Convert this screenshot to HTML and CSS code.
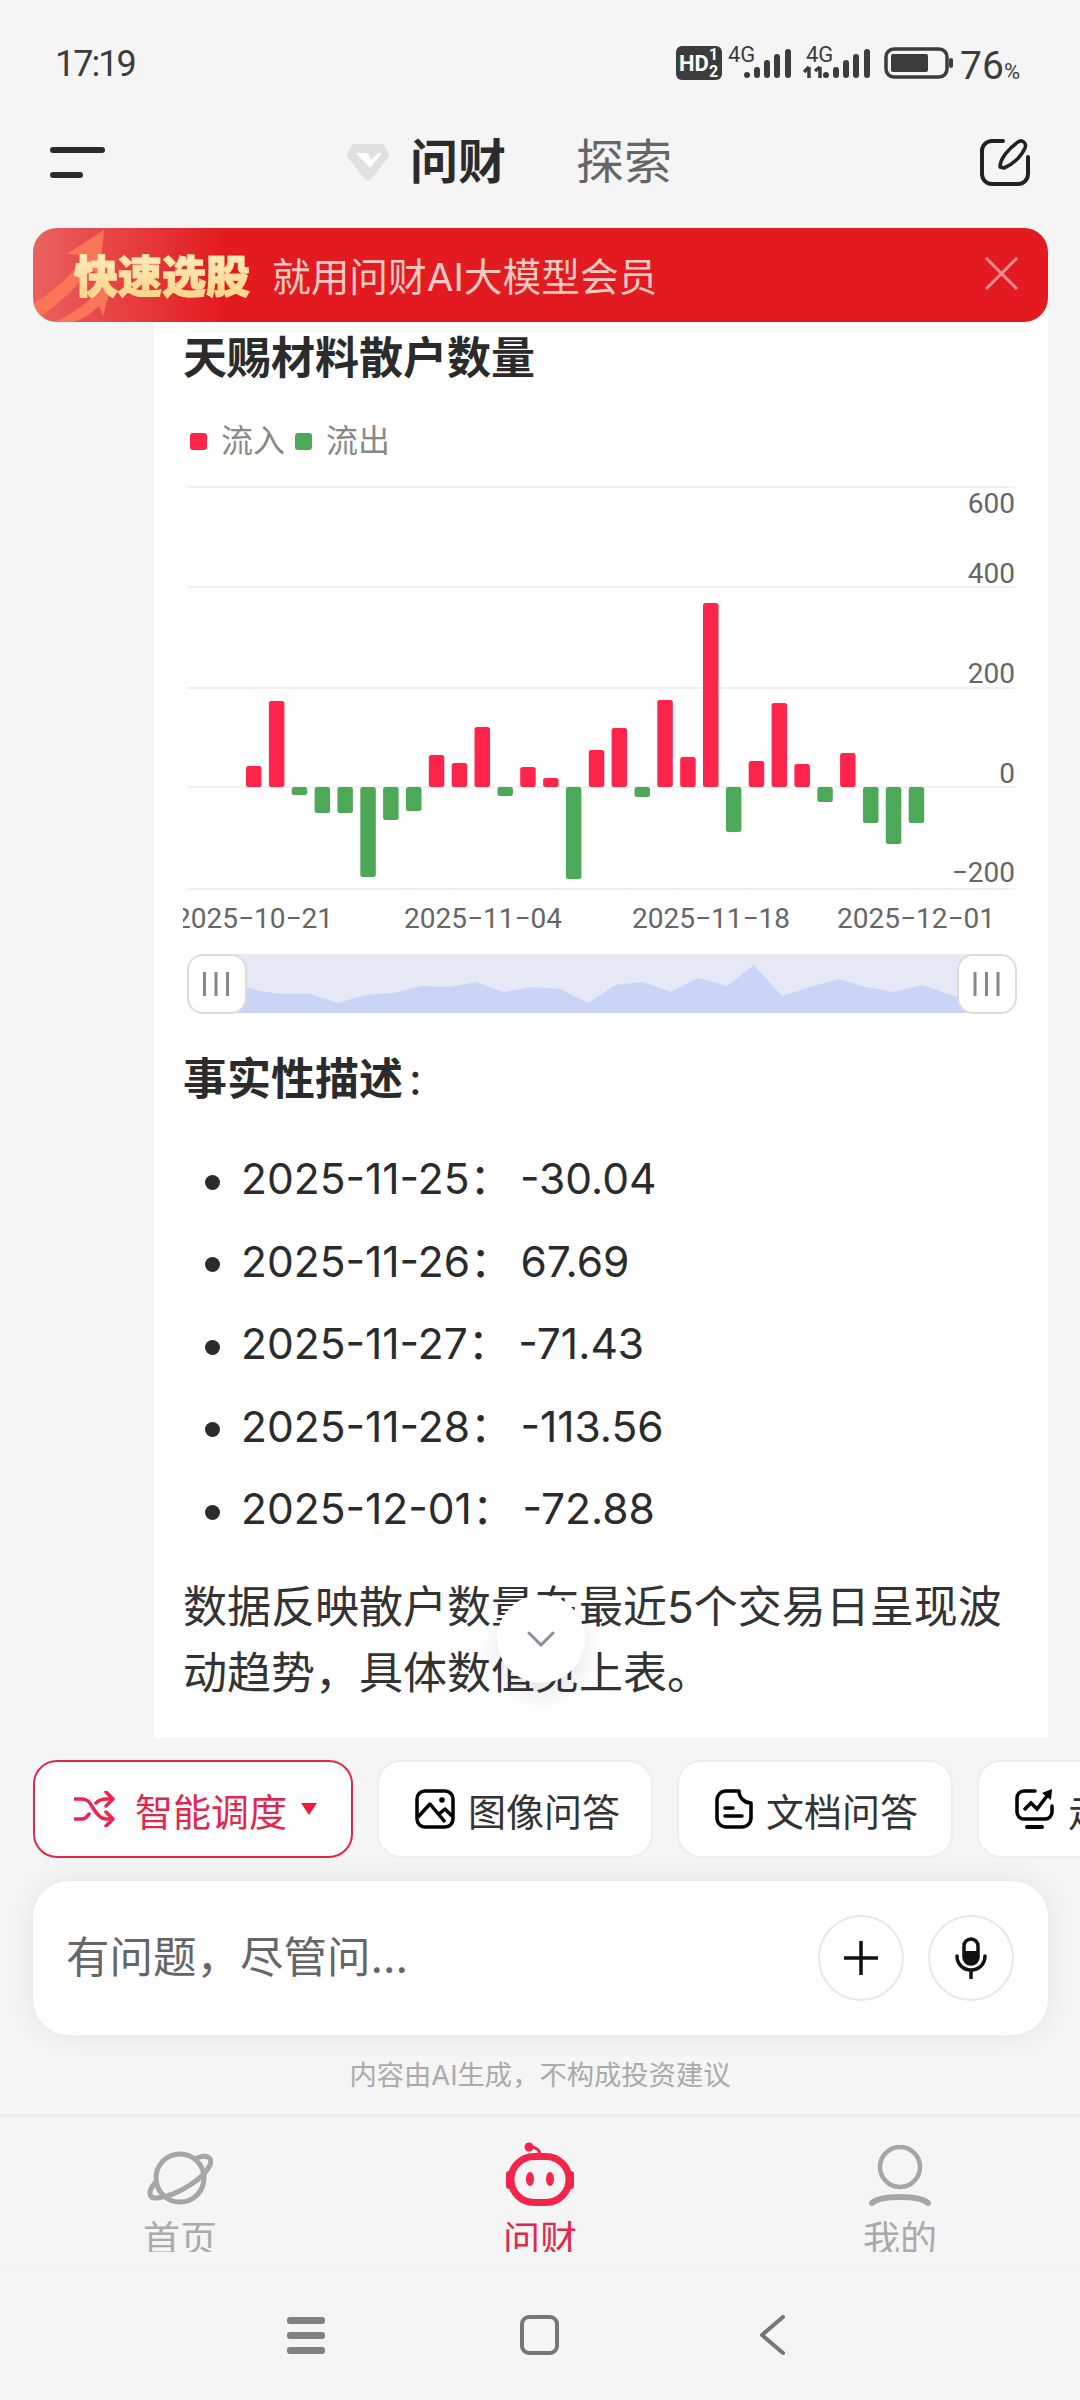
FILE: index.html
```html
<!DOCTYPE html>
<html lang="zh-CN">
<head>
    <meta charset="UTF-8">
    <meta name="viewport" content="width=device-width, initial-scale=1.0">
    <title>问财</title>
    <link rel="stylesheet" href="styles.css">
</head>
<body>

    <div class="status-bar">
        <span class="time">17:19</span>
        <div class="status-right">
            <svg class="status-icons" width="278" height="40" viewBox="675 40 278 40">
                <rect x="675" y="46" width="46" height="34" rx="6" class="st-fill"/>
                <text x="678" y="71" class="hd-text">HD</text>
                <text x="708" y="60" class="hd-num">1</text>
                <text x="708" y="77" class="hd-num">2</text>
                <text x="727" y="62" class="net-text">4G</text>
                <rect x="743" y="72" width="6" height="6" rx="3" class="st-fill"/>
                <rect x="753" y="67" width="6" height="11" rx="3" class="st-fill"/>
                <rect x="763" y="60" width="6" height="18" rx="3" class="st-fill"/>
                <rect x="773" y="54" width="6" height="24" rx="3" class="st-fill"/>
                <rect x="784" y="49" width="6" height="29" rx="3" class="st-fill"/>
                <text x="805" y="62" class="net-text">4G</text>
                <path d="M808 67v11M803 72l5-5M819 78v-11M819 67l-5 4" class="st-line"/>
                <rect x="822" y="72" width="6" height="6" rx="3" class="st-fill"/>
                <rect x="832" y="67" width="6" height="11" rx="3" class="st-fill"/>
                <rect x="842" y="60" width="6" height="18" rx="3" class="st-fill"/>
                <rect x="852" y="54" width="6" height="24" rx="3" class="st-fill"/>
                <rect x="863" y="49" width="6" height="29" rx="3" class="st-fill"/>
                <rect x="885" y="49" width="61" height="28" rx="8" class="st-line"/>
                <rect x="890" y="54" width="37" height="18" rx="2" class="st-fill"/>
                <rect x="948" y="58" width="4" height="10" rx="2" class="st-fill"/>
            </svg>
            <span class="battery">76<small>%</small></span>
        </div>
    </div>

    <div class="top-nav">
        <svg width="55" height="31" viewBox="0 0 55 31">
            <rect x="0" y="0" width="55" height="6" rx="3" fill="#2b2b2b"/>
            <rect x="0" y="25" width="33" height="6" rx="3" fill="#2b2b2b"/>
        </svg>
        <div class="nav-center">
            <svg width="43" height="37" viewBox="347 145 43 37">
                <path d="M355 145h26q3 0 4 2l4 8q1 2-1 4l-17 21q-3 3-6 0l-17-21q-2-2-1-4l4-8q1-2 4-2z" fill="#e0e0e0"/>
                <path d="M356 154h12l3 7 7-7h4l-12 15z" fill="#fff"/>
            </svg>
            <span class="nav-active">问财</span>
            <span class="nav-other">探索</span>
        </div>
        <svg class="nav-edit" width="50" height="48" viewBox="0 0 50 48">
            <path d="M23 3H12A10 10 0 0 0 2 13V36A10 10 0 0 0 12 46H38A10 10 0 0 0 48 36V19" fill="none" stroke="#222" stroke-width="4" stroke-linecap="round"/>
            <path d="M20 29c0-8 8-18 18-25 4-3 9 1 7 6-4 9-13 17-21 20z" fill="none" stroke="#222" stroke-width="3.5" stroke-linejoin="round"/>
        </svg>
    </div>

    <div class="banner">
        <svg class="banner-arrow" width="90" height="94" viewBox="0 0 90 94">
            <path d="M0 76C22 62 42 46 50 27L34 26 71 2 66 52 58 37C46 60 24 76 8 88L0 86z" fill="#fb7658"/>
            <path d="M22 94C38 86 50 78 58 70L49 68 78 58 70 88 66 78C58 86 50 90 42 94z" fill="#fb7658"/>
        </svg>
        <span class="banner-title">快速选股</span>
        <span class="banner-text">就用问财AI大模型会员</span>
        <svg class="banner-close" width="33" height="33" viewBox="0 0 33 33">
            <path d="M1 1L32 32M32 1L1 32" stroke="#f48d8d" stroke-width="3"/>
        </svg>
    </div>

    <div class="content">
        <h2 class="card-title">天赐材料散户数量</h2>
        <div class="legend">
            <i class="dot dot-in"></i><span>流入</span>
            <i class="dot dot-out"></i><span>流出</span>
        </div>

        <svg class="chart" width="894" height="553" viewBox="154 470 894 553">
            <defs>
                <clipPath id="dateClip"><rect x="183" y="890" width="840" height="60"/></clipPath>
            </defs>
            <path d="M187 487H1015M187 587H1015M187 688H1015M187 787H1015M187 889H1015" class="grid"/>
            <text x="1015" y="513" class="axis axis-y">600</text>
            <text x="1015" y="583" class="axis axis-y">400</text>
            <text x="1015" y="683" class="axis axis-y">200</text>
            <text x="1015" y="783" class="axis axis-y">0</text>
            <text x="1015" y="882" class="axis axis-y">−200</text>
            <g clip-path="url(#dateClip)">
                <text x="175" y="928" class="axis">2025−10−21</text>
                <text x="404" y="928" class="axis">2025−11−04</text>
                <text x="632" y="928" class="axis">2025−11−18</text>
                <text x="837" y="928" class="axis">2025−12−01</text>
            </g>
            <g class="bar-in">
                <rect x="246" y="766" width="15.5" height="21" rx="2.5"/>
                <rect x="268.9" y="701" width="15.5" height="86" rx="2.5"/>
                <rect x="428.8" y="755" width="15.5" height="32" rx="2.5"/>
                <rect x="451.7" y="763" width="15.5" height="24" rx="2.5"/>
                <rect x="474.5" y="727" width="15.5" height="60" rx="2.5"/>
                <rect x="520.2" y="767" width="15.5" height="20" rx="2.5"/>
                <rect x="543.1" y="778" width="15.5" height="9" rx="2.5"/>
                <rect x="588.8" y="750" width="15.5" height="37" rx="2.5"/>
                <rect x="611.6" y="728" width="15.5" height="59" rx="2.5"/>
                <rect x="657.3" y="700" width="15.5" height="87" rx="2.5"/>
                <rect x="680.2" y="757" width="15.5" height="30" rx="2.5"/>
                <rect x="703" y="603" width="15.5" height="184" rx="2.5"/>
                <rect x="748.7" y="761" width="15.5" height="26" rx="2.5"/>
                <rect x="771.6" y="703" width="15.5" height="84" rx="2.5"/>
                <rect x="794.4" y="764" width="15.5" height="23" rx="2.5"/>
                <rect x="840.1" y="753" width="15.5" height="34" rx="2.5"/>
            </g>
            <g class="bar-out">
                <rect x="291.7" y="787" width="15.5" height="8" rx="2.5"/>
                <rect x="314.6" y="787" width="15.5" height="26" rx="2.5"/>
                <rect x="337.4" y="787" width="15.5" height="26" rx="2.5"/>
                <rect x="360.3" y="787" width="15.5" height="90" rx="2.5"/>
                <rect x="383.1" y="787" width="15.5" height="33" rx="2.5"/>
                <rect x="406" y="787" width="15.5" height="24" rx="2.5"/>
                <rect x="497.4" y="787" width="15.5" height="9" rx="2.5"/>
                <rect x="565.9" y="787" width="15.5" height="92" rx="2.5"/>
                <rect x="634.5" y="787" width="15.5" height="10" rx="2.5"/>
                <rect x="725.9" y="787" width="15.5" height="45" rx="2.5"/>
                <rect x="817.3" y="787" width="15.5" height="15" rx="2.5"/>
                <rect x="863" y="787" width="15.5" height="36" rx="2.5"/>
                <rect x="885.8" y="787" width="15.5" height="57" rx="2.5"/>
                <rect x="908.7" y="787" width="15.5" height="36" rx="2.5"/>
            </g>

            <rect x="215" y="954" width="770" height="59" class="zoom-bg"/>
            <path d="M215 975L246 987 259 991 282 994H311L338 1003 365 995 394 993 421 986 449 987 476 982 504 992 532 987 560 989 588 1003 615 985 643 982 671 992 698 978 727 986 754 965 782 996 810 987 838 979 866 987 894 992 922 985 954 996 985 1000V1013H215z" class="zoom-area"/>
            <rect x="188" y="955" width="58" height="58" rx="15" class="zoom-handle"/>
            <rect x="958" y="955" width="58" height="58" rx="15" class="zoom-handle"/>
            <path d="M204.500 972V996M216 972V996M227.500 972V996M975 972V996M986.500 972V996M998 972V996" class="zoom-grip"/>
        </svg>

        <h3 class="sub-title">事实性描述<span class="colon">:</span></h3>
        <ul class="facts">
            <li>2025-11-25：<span class="val">-30.04</span></li>
            <li>2025-11-26：<span class="val">67.69</span></li>
            <li>2025-11-27：<span class="val">-71.43</span></li>
            <li>2025-11-28：<span class="val">-113.56</span></li>
            <li>2025-12-01：<span class="val">-72.88</span></li>
        </ul>
        <p class="summary">数据反映散户数量在最近5个交易日呈现波动趋势，具体数值见上表。</p>

        <div class="scroll-down">
            <svg width="28" height="16" viewBox="0 0 28 16">
                <path d="M2 2L14 14 26 2" fill="none" stroke="#8a8f99" stroke-width="3" stroke-linecap="round"/>
            </svg>
        </div>
    </div>

    <div class="tools">
        <div class="tool tool-active">
            <svg width="41" height="36" viewBox="0 0 41 36">
                <path d="M1 8H8C14 8 16 12 19 17S26 28 32 28H39M32 21L39 28 32 35M1 28H8C11 28 13 26 15 23M22 12C25 9 28 8 32 8H39M32 1L39 8 32 15" fill="none" stroke="#ee2350" stroke-width="3.500" stroke-linecap="round" stroke-linejoin="round"/>
            </svg>
            <span>智能调度</span>
            <i class="caret"></i>
        </div>
        <div class="tool">
            <svg width="40" height="40" viewBox="0 0 40 40">
                <rect x="2" y="2" width="36" height="36" rx="8" fill="none" stroke="#000" stroke-width="3.500"/>
                <circle cx="27" cy="11" r="2.800"/>
                <path d="M3 28L15 15 30 33M24 25L30 20 37 27" fill="none" stroke="#000" stroke-width="3.500" stroke-linejoin="round"/>
            </svg>
            <span>图像问答</span>
        </div>
        <div class="tool">
            <svg width="38" height="40" viewBox="0 0 38 40">
                <path d="M24 2H11A9 9 0 0 0 2 11V29A9 9 0 0 0 11 38H27A9 9 0 0 0 36 29V14C30 14 24 9 24 2Z" fill="none" stroke="#000" stroke-width="3.500" stroke-linejoin="round"/>
                <path d="M10 19H18M10 27H27" fill="none" stroke="#000" stroke-width="3.500" stroke-linecap="round"/>
            </svg>
            <span>文档问答</span>
        </div>
        <div class="tool">
            <svg width="40" height="42" viewBox="0 0 40 42">
                <path d="M20 3H9A7 7 0 0 0 2 10V24A7 7 0 0 0 9 31H30A7 7 0 0 0 37 24V18" fill="none" stroke="#000" stroke-width="3.500" stroke-linecap="round"/>
                <path d="M9 22L16 15 22 21 32 8" fill="none" stroke="#000" stroke-width="3.500"/>
                <path d="M27 5L37 1 36 12z"/>
                <path d="M12 39H27" fill="none" stroke="#000" stroke-width="4" stroke-linecap="round"/>
            </svg>
            <span>走势问答</span>
        </div>
    </div>

    <div class="input-wrap">
        <div class="input-card">
            <span class="placeholder">有问题，尽管问...</span>
            <div class="round-btn">
                <svg width="36" height="36" viewBox="0 0 36 36">
                    <path d="M18 1V35M1 18H35" stroke="#111" stroke-width="3.500"/>
                </svg>
            </div>
            <div class="round-btn">
                <svg width="32" height="42" viewBox="0 0 32 42">
                    <rect x="9" y="2" width="14" height="25" rx="7" fill="none" stroke="#111" stroke-width="3.500"/>
                    <path d="M9 14H23V20A7 7 0 0 1 9 20Z" fill="#111"/>
                    <path d="M2 19C2 27 8 33 16 33S30 27 30 19M16 33V41" fill="none" stroke="#111" stroke-width="3.500" stroke-linecap="round"/>
                </svg>
            </div>
        </div>
    </div>

    <div class="disclaimer">内容由AI生成，不构成投资建议</div>

    <div class="tabbar">
        <div class="tab">
            <div class="tab-icon">
                <svg width="66" height="56" viewBox="0 0 66 56">
                    <circle cx="33" cy="28" r="24" fill="none" stroke="#a6a6a6" stroke-width="5"/>
                    <path d="M50 8C60 4 66 8 63 15 58 28 30 46 10 48 2 49 0 42 8 33" fill="none" stroke="#a6a6a6" stroke-width="5" stroke-linecap="round"/>
                </svg>
            </div>
            <div class="tab-label">首页</div>
        </div>
        <div class="tab tab-on">
            <div class="tab-icon">
                <svg width="70" height="64" viewBox="0 0 70 64">
                    <rect x="6" y="14.500" width="58" height="46" rx="23" fill="none" stroke="#f5244a" stroke-width="7"/>
                    <rect x="1" y="29" width="6" height="18" rx="3" fill="#f5244a"/>
                    <rect x="63" y="29" width="6" height="18" rx="3" fill="#f5244a"/>
                    <circle cx="24" cy="5" r="4.500" fill="#f5244a"/>
                    <path d="M25 5C31 5 35 8 35 13" fill="none" stroke="#f5244a" stroke-width="3"/>
                    <ellipse cx="25" cy="37" rx="4" ry="7" fill="#f5244a"/>
                    <ellipse cx="45" cy="37" rx="4" ry="7" fill="#f5244a"/>
                </svg>
            </div>
            <div class="tab-label">问财</div>
        </div>
        <div class="tab">
            <div class="tab-icon">
                <svg width="62" height="61" viewBox="0 0 62 61">
                    <circle cx="31" cy="22" r="20" fill="none" stroke="#a6a6a6" stroke-width="4.500"/>
                    <path d="M3 58C12 50 50 50 59 58" fill="none" stroke="#a6a6a6" stroke-width="6" stroke-linecap="round"/>
                </svg>
            </div>
            <div class="tab-label">我的</div>
        </div>
    </div>

    <div class="sys-nav">
        <svg width="38" height="40" viewBox="0 0 38 40">
            <rect y="2" width="38" height="7" rx="3" fill="#808080"/>
            <rect y="17" width="38" height="7" rx="3" fill="#808080"/>
            <rect y="32" width="38" height="7" rx="3" fill="#808080"/>
        </svg>
        <svg class="sys-home" width="39" height="40" viewBox="0 0 39 40">
            <rect x="2" y="2" width="35" height="36" rx="7" fill="none" stroke="#777" stroke-width="4"/>
        </svg>
        <svg class="sys-back" width="25" height="40" viewBox="0 0 25 40">
            <path d="M23 2L2 20 23 38" fill="none" stroke="#777" stroke-width="4" stroke-linecap="round" stroke-linejoin="round"/>
        </svg>
    </div>

</body>
</html>
```

FILE: styles.css
```css
* {
    box-sizing: border-box;
}

body {
    margin: 0;
    width: 1080px;
    height: 2400px;
    overflow: hidden;
    background: #f5f5f5;
    color: #2b2b2b;
    font-family: Inter, "Noto Sans CJK SC", sans-serif;
}

svg {
    display: block;
    flex-shrink: 0;
}

/* status bar */
.status-bar {
    height: 120px;
    padding: 42px 60px 0 55px;
    display: flex;
    justify-content: space-between;
    font-family: Roboto, sans-serif;
    color: #3c3c3c;
}

.time {
    font-size: 36px;
    line-height: 44px;
    letter-spacing: -2px;
}

.status-right {
    display: flex;
    gap: 6px;
}

.status-icons {
    margin-top: -2px;
}

.st-fill {
    fill: #3c3c3c;
}

.st-line {
    fill: none;
    stroke: #3c3c3c;
    stroke-width: 3.5;
}

.hd-text {
    fill: #fff;
    font: 700 22px Roboto, sans-serif;
}

.hd-num {
    fill: #fff;
    font: 700 16px Roboto, sans-serif;
}

.net-text {
    fill: #3c3c3c;
    font: 400 22px Roboto, sans-serif;
}

.battery {
    font-size: 39px;
    line-height: 48px;
}

.battery small {
    font-size: 22px;
}

/* top nav */
.top-nav {
    height: 84px;
    margin-bottom: 24px;
    padding: 0 50px;
    display: flex;
    align-items: center;
}

.nav-center {
    margin-left: 242px;
    display: flex;
    align-items: center;
    font-size: 48px;
    line-height: 60px;
}

.nav-active {
    margin-left: 20px;
    font-weight: 700;
    color: #2b2b2b;
}

.nav-other {
    margin-left: 70px;
    color: #666;
}

.nav-edit {
    margin-left: auto;
}

/* promo banner */
.banner {
    position: relative;
    z-index: 2;
    height: 94px;
    margin: 0 32px 0 33px;
    padding: 0 0 3px 41px;
    border-radius: 24px;
    background: linear-gradient(90deg, #e9625f 0, #e31b20 190px);
    display: flex;
    align-items: center;
    overflow: hidden;
}

.banner-arrow {
    position: absolute;
    left: 0;
    top: 0;
}

.banner-title {
    position: relative;
    font-size: 44px;
    font-weight: 900;
    background: linear-gradient(180deg, #fff3cf, #fcd07a);
    -webkit-background-clip: text;
    background-clip: text;
    color: transparent;
    -webkit-text-stroke: 0.8px #fde0a0;
}

.banner-text {
    margin-left: 22px;
    font-size: 38.7px;
    color: #fbc8c2;
}

.banner-close {
    margin-left: auto;
    margin-right: 30px;
}

/* answer card */
.content {
    position: relative;
    height: 1440px;
    margin: -24px 32px 0 154px;
    padding: 30px 29px 0;
    background: #fff;
}

.card-title {
    margin: 0;
    font-size: 44px;
    line-height: 60px;
    font-weight: 700;
}

.legend {
    margin-top: 33px;
    height: 40px;
    padding-left: 7px;
    display: flex;
    align-items: center;
    font-size: 32px;
    line-height: 40px;
    color: #888;
}

.dot {
    width: 17px;
    height: 17px;
    border-radius: 3px;
    margin-right: 14px;
}

.legend span {
    margin-right: 10px;
}

.dot-in {
    background: #ff2449;
}

.dot-out {
    background: #4da858;
}

.chart {
    margin: 9px 0 0 -29px;
}

.grid {
    fill: none;
    stroke: #f1f1f1;
    stroke-width: 2;
}

.axis {
    font: 400 28px Roboto, sans-serif;
    fill: #666;
}

.axis-y {
    text-anchor: end;
}

.bar-in {
    fill: #ff2449;
}

.bar-out {
    fill: #4da858;
}

.zoom-bg {
    fill: #e5e9f6;
}

.zoom-area {
    fill: #c9d5f6;
}

.zoom-handle {
    fill: #fff;
    stroke: #dcdcdc;
    stroke-width: 2;
}

.zoom-grip {
    fill: none;
    stroke: #888;
    stroke-width: 3;
}

.sub-title {
    margin: 26px 0 0;
    font-size: 44px;
    line-height: 60px;
    font-weight: 700;
}

.colon {
    margin-left: 6px;
    font-weight: 400;
}

.facts {
    list-style: none;
    margin: 29px 0 0;
    padding: 0 0 0 22px;
}

.facts li {
    height: 82.5px;
    line-height: 82.5px;
    font-size: 42.5px;
    color: #2b2b2b;
}

.facts li::before {
    content: "";
    display: inline-block;
    vertical-align: middle;
    width: 15px;
    height: 15px;
    border-radius: 50%;
    background: #2b2b2b;
    margin-right: 21px;
}

.val {
    margin-left: 8px;
}

.summary {
    margin: 23.5px 0 0;
    font-size: 44px;
    line-height: 66px;
    color: #333;
}

.scroll-down {
    position: absolute;
    left: 343px;
    top: 1297px;
    width: 88px;
    height: 88px;
    border-radius: 50%;
    background: #fff;
    box-shadow: 0 12px 24px rgba(0, 0, 0, 0.1);
    display: flex;
    justify-content: center;
    padding-top: 36px;
}

/* tool buttons */
.tools {
    margin-top: 22px;
    padding-left: 33px;
    height: 98px;
    display: flex;
    gap: 24px;
    overflow: hidden;
}

.tool {
    flex-shrink: 0;
    width: 276px;
    height: 98px;
    padding-left: 36px;
    border: 2px solid #eee;
    border-radius: 24px;
    background: #fff;
    display: flex;
    align-items: center;
    gap: 13px;
    font-size: 38px;
    color: #333;
}

.tool-active {
    width: 320px;
    padding-left: 39px;
    gap: 20px;
    border-color: #e3264b;
    color: #e3264b;
}

.caret {
    margin-left: -6px;
    border-style: solid;
    border-width: 12px 8px 0;
    border-color: #f5183f transparent transparent;
}

/* input */
.input-wrap {
    height: 199px;
    padding: 23px 32px 0 33px;
    overflow: hidden;
}

.input-card {
    height: 154px;
    padding: 0 34px 0 33px;
    border-radius: 36px;
    background: #fff;
    box-shadow: 0 0 30px rgba(0, 0, 0, 0.08);
    display: flex;
    align-items: center;
    gap: 24px;
}

.placeholder {
    margin: 0 auto 8px 0;
    font-size: 43.5px;
    color: #666;
}

.round-btn {
    width: 86px;
    height: 86px;
    border: 2px solid #e8e8e8;
    border-radius: 50%;
    display: flex;
    align-items: center;
    justify-content: center;
}

.disclaimer {
    height: 57px;
    padding-top: 1px;
    font-size: 27.3px;
    line-height: 36px;
    text-align: center;
    color: #aaa;
}

/* bottom tabs */
.tabbar {
    height: 155px;
    border-top: 3px solid #eee;
    border-bottom: 1px solid #f0f0f0;
    display: grid;
    grid-template-columns: repeat(3, 1fr);
}

.tab {
    padding-top: 25px;
    text-align: center;
    color: #aaa;
}

.tab-icon {
    height: 64px;
    display: flex;
    align-items: flex-end;
    justify-content: center;
}

.tab-label {
    margin-top: 10px;
    height: 36px;
    overflow: hidden;
    font-size: 37px;
    line-height: 48px;
}

.tab-on {
    color: #e3264b;
}

/* system nav */
.sys-nav {
    height: 131px;
    padding: 46px 0 0 287px;
    display: flex;
}

.sys-home {
    margin-left: 195px;
}

.sys-back {
    margin-left: 201px;
}
```
